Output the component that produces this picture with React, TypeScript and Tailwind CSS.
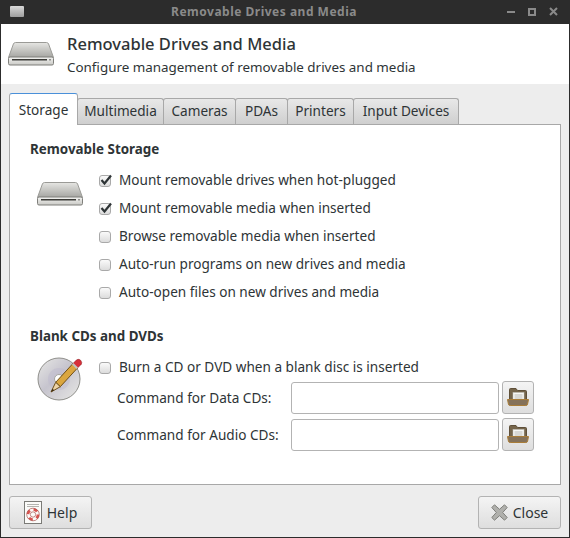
import React from "react";

const font = "font-['Noto_Sans',sans-serif]";

function DriveIcon({ id }: { id: string }) {
  return (
    <svg width="46" height="24" viewBox="0 0 46 24">
      <defs>
        <linearGradient id={`${id}Top`} x1="0" y1="0" x2="0" y2="1">
          <stop offset="0" stopColor="#e6e6e3" />
          <stop offset="1" stopColor="#a5a5a1" />
        </linearGradient>
        <linearGradient id={`${id}Front`} x1="0" y1="0" x2="0" y2="1">
          <stop offset="0" stopColor="#f4f4f2" />
          <stop offset="1" stopColor="#c9c9c5" />
        </linearGradient>
      </defs>
      <path d="M7.5 0.5 H38.5 Q40 0.5 40.6 2 L45.5 15.5 H0.5 L5.4 2 Q6 0.5 7.5 0.5Z" fill={`url(#${id}Top)`} stroke="#9a9a96" />
      <rect x="0.5" y="15" width="45" height="8" rx="1.5" fill={`url(#${id}Front)`} stroke="#7f7f7b" />
      <rect x="4" y="17" width="35" height="1.5" fill="#3a3a36" />
      <rect x="41" y="17" width="2" height="1.5" fill="#8d8d89" />
    </svg>
  );
}

function DiscIcon() {
  return (
    <svg width="46" height="46" viewBox="0 0 46 46">
      <defs>
        <linearGradient id="discFill" x1="0" y1="0" x2="1" y2="1">
          <stop offset="0" stopColor="#e8e8e5" />
          <stop offset="0.45" stopColor="#c6c4ce" />
          <stop offset="1" stopColor="#e8e8e4" />
        </linearGradient>
      </defs>
      <circle cx="22" cy="23" r="21" fill="url(#discFill)" stroke="#8f8f8b" />
      <circle cx="22" cy="23" r="11" fill="#bdbacd" opacity="0.5" />
      <circle cx="22" cy="23" r="4.5" fill="#ffffff" stroke="#a5a5a1" />
      <path d="M18.7 26.3 L35.7 7.8 L40.3 12.2 L23.3 30.7Z" fill="#dba63f" stroke="#6f4f1a" />
      <path d="M18.7 26.3 L23.3 30.7 L14 36Z" fill="#ecd3a8" stroke="#6f4f1a" />
      <path d="M14 36 L15.5 32.8 L17.3 34.2Z" fill="#3a2c14" />
      <path d="M35.7 7.8 L39.7 3.8 Q42 2.6 43.7 4.4 Q45.4 6.4 44.3 8.2 L40.3 12.2Z" fill="#d8303a" stroke="#8e1c22" strokeWidth="0.6" />
      <path d="M35.7 7.8 L40.3 12.2" stroke="#c4c4c0" strokeWidth="2" />
    </svg>
  );
}

function FolderIcon() {
  return (
    <svg width="22" height="19" viewBox="0 0 22 19">
      <path d="M2.5 13 V1.5 Q2.5 0.5 3.5 0.5 H9 L10.5 2.5 H18.5 Q19.5 2.5 19.5 3.5 V13Z" fill="#75654b" stroke="#5f503a" />
      <rect x="6" y="4.5" width="11" height="8.5" fill="#f7f7f4" stroke="#c4c4bf" strokeWidth="0.5" />
      <path d="M7.5 7 H15.5 M7.5 9 H15.5 M7.5 11 H15.5" stroke="#b9b9b5" strokeWidth="1" />
      <path d="M0.5 11.5 H21.5 L20.6 16 Q20.4 17.5 18.8 17.5 H3.2 Q1.6 17.5 1.4 16Z" fill="#85725a" stroke="#aa7d38" />
    </svg>
  );
}

function HelpIcon() {
  return (
    <svg width="18" height="23" viewBox="0 0 18 23">
      <rect x="0.5" y="0.5" width="17" height="22" fill="#fbfbf9" stroke="#7b7b77" />
      <path d="M3 3.5 H15 M3 5.5 H15" stroke="#b4b4b0" strokeWidth="1" />
      <circle cx="9" cy="13.5" r="5" fill="none" stroke="#d9534f" strokeWidth="2.6" strokeDasharray="4 3.85" />
      <circle cx="9" cy="13.5" r="6.3" fill="none" stroke="#9e3a36" strokeWidth="0.6" />
      <circle cx="9" cy="13.5" r="2.7" fill="none" stroke="#9e3a36" strokeWidth="0.6" />
    </svg>
  );
}

function CloseIcon() {
  return (
    <svg width="17" height="17" viewBox="0 0 17 17">
      <path
        d="M3.5 0.8 L8.5 5.3 L13.5 0.8 L16.2 3.5 L11.7 8.5 L16.2 13.5 L13.5 16.2 L8.5 11.7 L3.5 16.2 L0.8 13.5 L5.3 8.5 L0.8 3.5Z"
        fill="#b0b0ac"
        stroke="#80807c"
        strokeLinejoin="round"
      />
    </svg>
  );
}

function Check({ label, checked }: { label: string; checked?: boolean }) {
  return (
    <div className="flex h-[28px] items-center">
      <span className="relative mr-[8px] mt-[1px] h-[12px] w-[12px] rounded-[3px] border border-[#a9a9a9] bg-gradient-to-b from-[#fafafa] to-[#dcdcdc]">
        {checked && (
          <svg className="absolute left-[-1px] top-[-3px]" width="14" height="14" viewBox="0 0 14 14">
            <path d="M2.5 7 L5.5 10.5 L12 2.5" fill="none" stroke="#2e3436" strokeWidth="2.2" />
          </svg>
        )}
      </span>
      <span>{label}</span>
    </div>
  );
}

function Tab({ label, active, width }: { label: string; active?: boolean; width: string }) {
  if (active) {
    return (
      <div className={`z-10 mb-[-1px] flex h-[32px] items-center justify-center rounded-t-[3px] border border-b-0 border-[#a8a8a8] border-t-[#4a90d9] bg-white pt-[1px] ${width}`}>
        {label}
      </div>
    );
  }
  return (
    <div className={`ml-[-1px] flex h-[26px] items-center justify-center rounded-t-[3px] border border-b-0 border-[#a8a8a8] bg-gradient-to-b from-[#e8e8e8] to-[#cfcfcf] pb-[1px] ${width}`}>
      {label}
    </div>
  );
}

function CommandRow({ label }: { label: string }) {
  return (
    <div className="flex h-[33px] items-center">
      <span className="w-[174px] pt-[2px]">{label}</span>
      <div className="h-[32px] w-[208px] rounded-[3px] border border-[#b3b3b3] bg-white" />
      <button className="ml-[3px] flex h-[33px] w-[32px] items-center justify-center rounded-[3px] border border-[#b3b3b3] bg-gradient-to-b from-[#f4f4f4] to-[#dedede]">
        <FolderIcon />
      </button>
    </div>
  );
}

export default function App() {
  return (
    <div className={`h-[538px] w-[570px] overflow-hidden bg-[#ededed] text-[13.6px] text-[#2e3436] ${font}`}>
      <div className="relative flex h-[24px] items-center justify-center bg-[#2c2c2c] pr-[42px] text-[12px] font-bold tracking-[0.5px] text-[#8a8a8a]">
        <div className="absolute left-[10px] top-[6px] h-[11px] w-[14px] rounded-[1px] bg-gradient-to-b from-[#d8d8d8] to-[#9e9e9e]" />
        Removable Drives and Media
        <div className="absolute right-[12px] top-[7px] flex items-center gap-[13px]">
          <div className="h-[2px] w-[8px] bg-[#8a8a8a]" />
          <div className="h-[8px] w-[8px] border-2 border-[#8a8a8a]" />
          <svg width="9" height="9" viewBox="0 0 9 9">
            <path d="M1 1 L8 8 M8 1 L1 8" stroke="#8a8a8a" strokeWidth="2" />
          </svg>
        </div>
      </div>

      <div className="h-[514px] border-x border-b border-[#2c2c2c]">
        <div className="flex h-[60px] items-start bg-white pl-[7px] pt-[9px]">
          <div className="mr-[13px] mt-[9px]">
            <DriveIcon id="head" />
          </div>
          <div>
            <div className="text-[16.5px] font-medium leading-[22px]">Removable Drives and Media</div>
            <div className="mt-[2px] text-[13.4px] leading-[20px]">Configure management of removable drives and media</div>
          </div>
        </div>

        <div className="px-[8px]">
          <div className="flex h-[40px] items-end">
            <Tab label="Storage" active width="w-[69px]" />
            <Tab label="Multimedia" width="w-[87px]" />
            <Tab label="Cameras" width="w-[73px]" />
            <Tab label="PDAs" width="w-[53px]" />
            <Tab label="Printers" width="w-[67px]" />
            <Tab label="Input Devices" width="w-[106px]" />
          </div>

          <div className="h-[361px] border border-[#a8a8a8] bg-white px-[20px] pt-[14px]">
            <div className="text-[13.4px] font-bold leading-[20px]">Removable Storage</div>
            <div className="mt-[7px] flex">
              <div className="ml-[7px] mt-[16px] w-[62px]">
                <DriveIcon id="body" />
              </div>
              <div>
                <Check label="Mount removable drives when hot-plugged" checked />
                <Check label="Mount removable media when inserted" checked />
                <Check label="Browse removable media when inserted" />
                <Check label="Auto-run programs on new drives and media" />
                <Check label="Auto-open files on new drives and media" />
              </div>
            </div>

            <div className="mt-[20px] text-[13.4px] font-bold leading-[20px]">Blank CDs and DVDs</div>
            <div className="mt-[7px] flex">
              <div className="ml-[7px] mt-[3px] w-[62px]">
                <DiscIcon />
              </div>
              <div>
                <Check label="Burn a CD or DVD when a blank disc is inserted" />
                <div className="ml-[18px] flex flex-col gap-[4px]">
                  <CommandRow label="Command for Data CDs:" />
                  <CommandRow label="Command for Audio CDs:" />
                </div>
              </div>
            </div>
          </div>

          <div className="mt-[11px] flex justify-between">
            <button className="flex h-[33px] w-[83px] items-center justify-center gap-[5px] rounded-[3px] border border-[#b3b3b3] bg-gradient-to-b from-[#f4f4f4] to-[#dedede]">
              <HelpIcon />
              <span className="pb-[1px] text-[14px]">Help</span>
            </button>
            <button className="flex h-[33px] w-[83px] items-center justify-center gap-[5px] rounded-[3px] border border-[#b3b3b3] bg-gradient-to-b from-[#f4f4f4] to-[#dedede]">
              <CloseIcon />
              <span className="pb-[1px] text-[14px]">Close</span>
            </button>
          </div>
        </div>
      </div>
    </div>
  );
}
